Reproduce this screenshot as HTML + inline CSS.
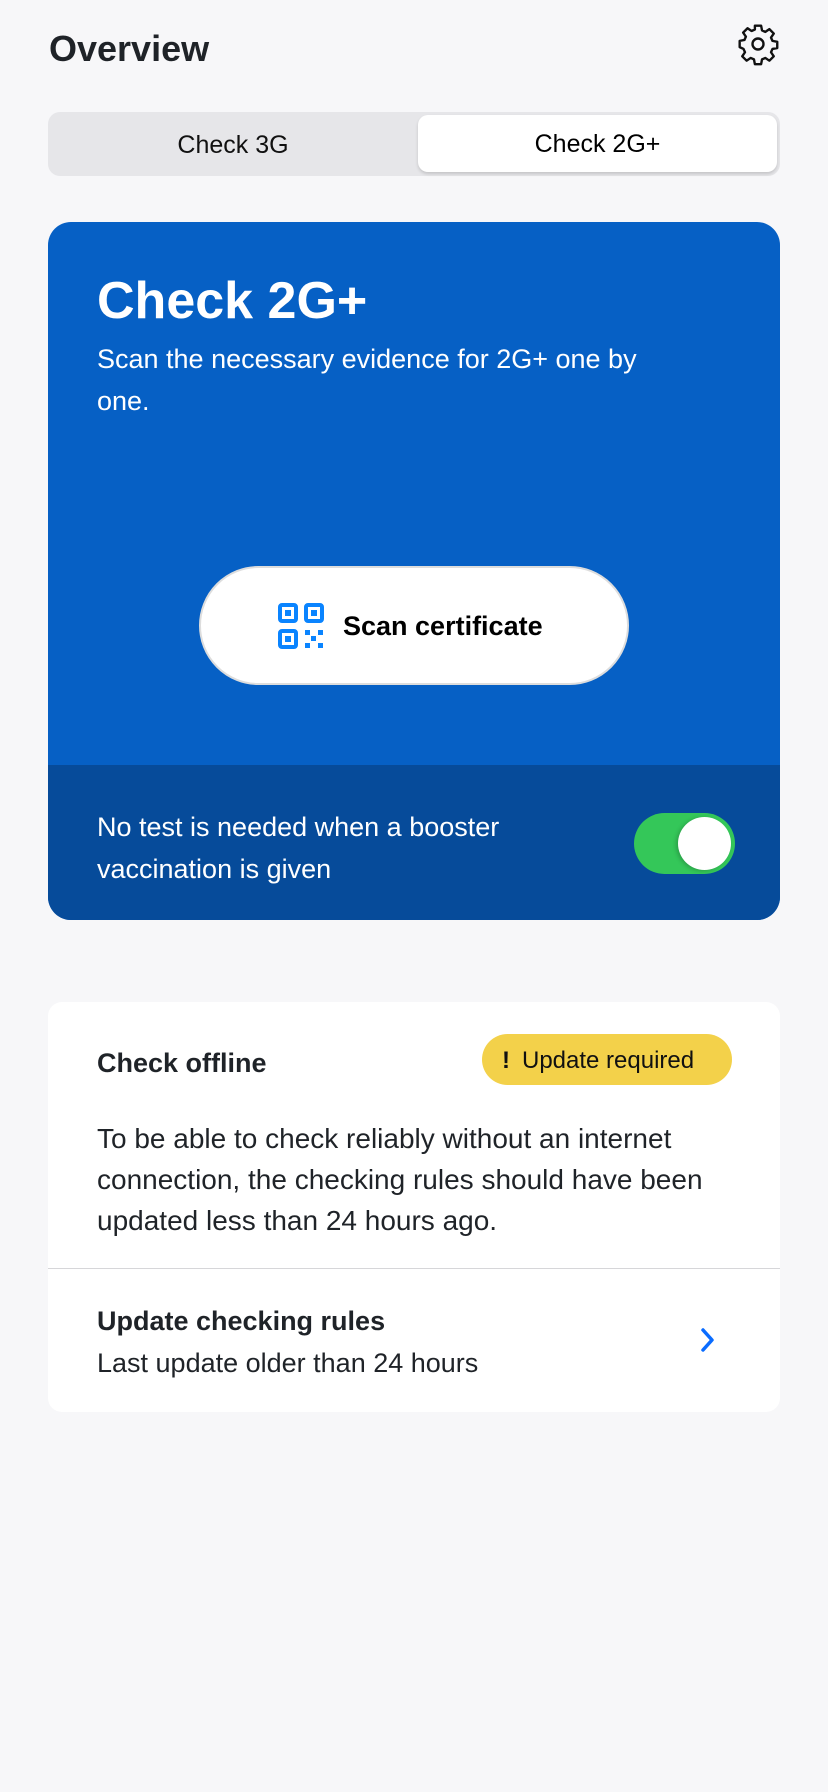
<!DOCTYPE html>
<html><head><meta charset="utf-8"><style>
*{margin:0;padding:0;box-sizing:border-box}
body{width:828px;height:1792px;background:#f7f7f9;font-family:"Liberation Sans",sans-serif;position:relative;overflow:hidden;color:#1c1c1e}
.abs{position:absolute}
</style></head><body>
<div class="abs" style="left:49px;top:28px;font-size:36px;font-weight:bold;color:#1f2328">Overview</div>
<svg class="abs" style="left:736px;top:22px" width="44" height="44" viewBox="0 0 24 24" fill="none" stroke="#111" stroke-width="1.3" stroke-linejoin="round"><path d="M10.3 2h3.4l.5 2.6 1.8.8 2.2-1.5 2.4 2.4-1.5 2.2.8 1.8 2.6.5v3.4l-2.6.5-.8 1.8 1.5 2.2-2.4 2.4-2.2-1.5-1.8.8-.5 2.6h-3.4l-.5-2.6-1.8-.8-2.2 1.5-2.4-2.4 1.5-2.2-.8-1.8L2 13.7v-3.4l2.6-.5.8-1.8-1.5-2.2 2.4-2.4 2.2 1.5 1.8-.8z"/><circle cx="12" cy="12" r="3"/></svg>
<div class="abs" style="left:48px;top:112px;width:732px;height:64px;background:#e6e6e9;border-radius:12px"></div>
<div class="abs" style="left:48px;top:113px;width:370px;height:64px;line-height:64px;text-align:center;font-size:25px;color:#111">Check 3G</div>
<div class="abs" style="left:418px;top:115px;width:359px;height:57px;background:#fff;border-radius:10px;box-shadow:0 2px 3px rgba(0,0,0,.15);line-height:59px;text-align:center;font-size:25px;color:#000">Check 2G+</div>
<div class="abs" style="left:48px;top:222px;width:732px;height:698px;background:#0660c5;border-radius:23px;overflow:hidden">
<div class="abs" style="left:0;top:543px;width:732px;height:155px;background:#064b9a"></div>
<div class="abs" style="left:49px;top:49px;font-size:52px;font-weight:bold;color:#fff">Check 2G+</div>
<div class="abs" style="left:49px;top:116px;width:560px;font-size:27px;line-height:42px;color:#fff">Scan the necessary evidence for 2G+ one by one.</div>
<div class="abs" style="left:151px;top:344px;width:430px;height:119px;background:#fff;border-radius:60px;border:2px solid #ddd"></div>
<svg class="abs" style="left:230px;top:381px" width="46" height="46" viewBox="0 0 46 46" fill="#0a84ff"><path fill-rule="evenodd" d="M0 4a4 4 0 014-4h12a4 4 0 014 4v12a4 4 0 01-4 4H4a4 4 0 01-4-4zM4 4v12h12V4zM26 4a4 4 0 014-4h12a4 4 0 014 4v12a4 4 0 01-4 4H30a4 4 0 01-4-4zM30 4v12h12V4zM0 30a4 4 0 014-4h12a4 4 0 014 4v12a4 4 0 01-4 4H4a4 4 0 01-4-4zM4 30v12h12V30z"/><rect x="7" y="7" width="6" height="6"/><rect x="33" y="7" width="6" height="6"/><rect x="7" y="33" width="6" height="6"/><rect x="27" y="27" width="5" height="5"/><rect x="40" y="27" width="5" height="5"/><rect x="33" y="33" width="5" height="5"/><rect x="27" y="40" width="5" height="5"/><rect x="40" y="40" width="5" height="5"/></svg>
<div class="abs" style="left:295px;top:389px;font-size:27px;font-weight:bold;color:#000">Scan certificate</div>
<div class="abs" style="left:49px;top:584px;width:480px;font-size:27px;line-height:42px;color:#fff">No test is needed when a booster vaccination is given</div>
<div class="abs" style="left:586px;top:591px;width:101px;height:61px;background:#34c759;border-radius:31px"></div>
<div class="abs" style="left:630px;top:595px;width:53px;height:53px;background:#fff;border-radius:50%;box-shadow:-2px 1px 4px rgba(0,0,0,.2)"></div>
</div>
<div class="abs" style="left:48px;top:1002px;width:732px;height:410px;background:#fff;border-radius:14px">
<div class="abs" style="left:49px;top:46px;font-size:27px;font-weight:bold;color:#1f2328">Check offline</div>
<div class="abs" style="left:434px;top:32px;width:250px;height:51px;background:#f3d14a;border-radius:26px;font-size:24px;line-height:53px;padding-left:40px;color:#111"><span style="position:absolute;left:20px;font-weight:bold">!</span>Update required</div>
<div class="abs" style="left:49px;top:116px;width:650px;font-size:28px;line-height:41px;color:#1f2328">To be able to check reliably without an internet connection, the checking rules should have been updated less than 24 hours ago.</div>
<div class="abs" style="left:0;top:266px;width:732px;height:1px;background:#d6d6d9"></div>
<div class="abs" style="left:49px;top:304px;font-size:27px;font-weight:bold;color:#1f2328">Update checking rules</div>
<div class="abs" style="left:49px;top:346px;font-size:27px;color:#1f2328">Last update older than 24 hours</div>
<svg class="abs" style="left:650px;top:324px" width="20" height="28" viewBox="0 0 20 28" fill="none" stroke="#0a6cff" stroke-width="3.5" stroke-linecap="round" stroke-linejoin="round"><path d="M5 4l9 10-9 10"/></svg>
</div>
</body></html>
